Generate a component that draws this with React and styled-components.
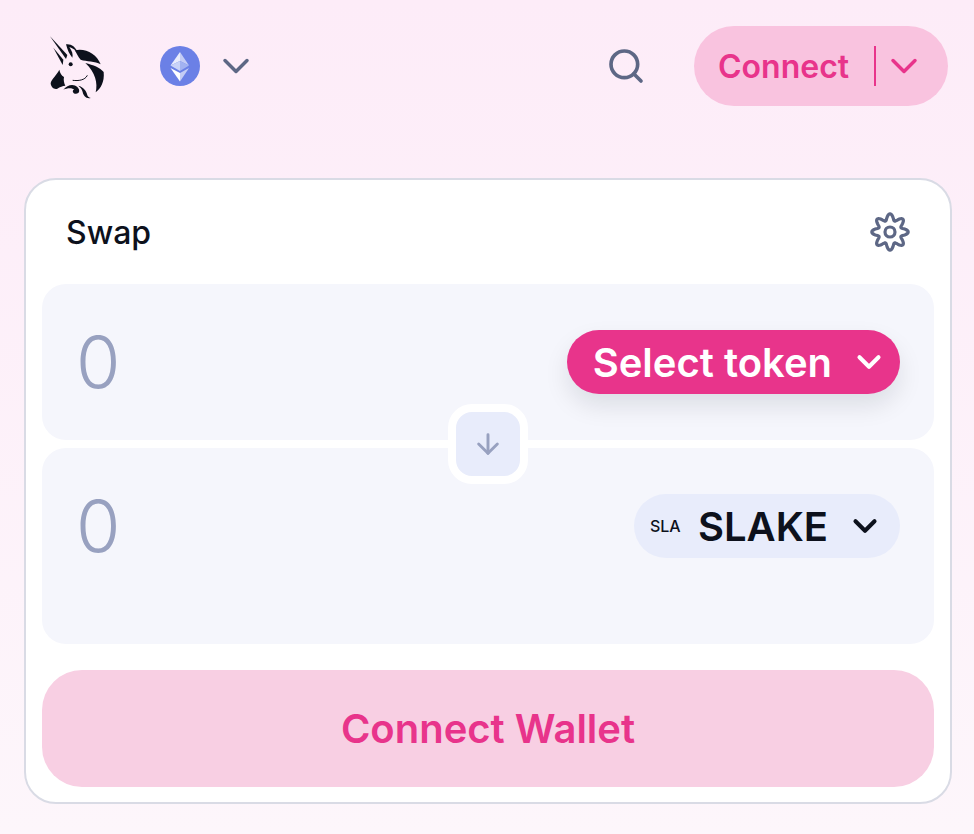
import React from "react";
import styled, { createGlobalStyle } from "styled-components";
import { ArrowDown, ChevronDown, Search } from "lucide-react";

const GlobalStyle = createGlobalStyle`
  html, body {
    margin: 0;
    padding: 0;
  }
  body {
    min-height: 834px;
    font-family: Inter, "Liberation Sans", sans-serif;
    background: linear-gradient(180deg, #fdecf8 0%, #fdf6fb 100%);
    overflow: hidden;
  }
  * {
    box-sizing: border-box;
  }
`;

const Page = styled.div`
  width: 974px;
  height: 834px;
  padding: 26px 22px 0 24px;
`;

const Header = styled.header`
  display: flex;
  align-items: center;
  height: 80px;
  padding-left: 24px;
  padding-right: 4px;
`;

const Logo = styled.svg`
  width: 58px;
  height: 64px;
  margin-top: 1px;
`;

const NetworkButton = styled.div`
  display: flex;
  align-items: center;
  gap: 14px;
  margin-left: 54px;
  color: #5d6785;
`;

const SearchButton = styled.div`
  display: flex;
  margin-left: auto;
  margin-right: 48px;
  color: #5d6785;
`;

const ConnectButton = styled.div`
  display: flex;
  align-items: center;
  width: 254px;
  height: 80px;
  padding-left: 24px;
  border-radius: 40px;
  background: #f9c3df;
  color: #e8348b;
  font-size: 32px;
  font-weight: 600;
`;

const Divider = styled.span`
  width: 2px;
  height: 40px;
  margin: 0 6px 0 25px;
  background: #e8348b;
`;

const Card = styled.main`
  position: relative;
  width: 928px;
  height: 626px;
  margin-top: 72px;
  padding: 0 16px;
  border: 2px solid #d9dbe5;
  border-radius: 32px;
  background: #fff;
`;

const CardHeader = styled.div`
  display: flex;
  align-items: center;
  justify-content: space-between;
  height: 104px;
  padding: 0 24px;
`;

const Title = styled.div`
  color: #0d111c;
  font-size: 32px;
  font-weight: 500;
`;

const Panel = styled.section`
  display: flex;
  justify-content: space-between;
  height: ${(p) => p.$height}px;
  margin-bottom: 8px;
  padding: 46px 34px 0 34px;
  border-radius: 24px;
  background: #f5f6fc;
`;

const Amount = styled.div`
  height: 64px;
  color: #98a1c0;
  font-size: 72px;
  font-weight: 350;
  line-height: 64px;
`;

const TokenButton = styled.div`
  display: flex;
  align-items: center;
  height: 64px;
  padding-left: ${(p) => (p.$selected ? 16 : 26)}px;
  padding-right: ${(p) => (p.$selected ? 16 : 12)}px;
  border-radius: 32px;
  background: ${(p) => (p.$selected ? "#e8ecfb" : "#e8348b")};
  color: ${(p) => (p.$selected ? "#0d111c" : "#fff")};
  font-size: 40px;
  font-weight: 600;
  box-shadow: ${(p) => (p.$selected ? "none" : "0 12px 24px rgba(13, 17, 28, 0.1)")};
`;

const TokenLogo = styled.span`
  width: 32px;
  margin-right: 16px;
  font-size: 16px;
  font-weight: 500;
`;

const TokenName = styled.span`
  margin-right: 18px;
`;

const FlipButton = styled.div`
  position: absolute;
  top: 224px;
  left: 422px;
  display: flex;
  align-items: center;
  justify-content: center;
  width: 80px;
  height: 80px;
  border: 8px solid #fff;
  border-radius: 24px;
  background: #e8ecfb;
  color: #98a1c0;
`;

const WalletButton = styled.div`
  display: flex;
  align-items: center;
  justify-content: center;
  height: 117px;
  margin-top: 26px;
  border-radius: 40px;
  background: #f8cfe3;
  color: #e8348b;
  font-size: 40px;
  font-weight: 600;
`;

const UnicornLogo = () => (
  <Logo viewBox="55 44 172 192" fill="#0d111c">
    <path d="M60 48 L112 104 L108 116 Z" />
    <path d="M70 82 L100 118 L98 134 Z" />
    <path d="M108 72 C124 70 136 80 142 94 C136 90 128 84 118 80 C126 92 130 102 127 112 C118 102 112 88 108 72 Z" />
    <path d="M134 90 C165 82 200 100 212 132 C195 122 170 124 152 118 C144 110 140 98 134 90 Z" />
    <path d="M166 128 C190 134 210 142 221 155 C224 185 212 205 197 216 C204 190 196 155 166 128 Z" />
    <circle cx="122" cy="132" r="6" />
    <path d="M88 148 C80 165 65 175 62 188 C62 200 72 208 82 205 C90 200 98 196 106 196 C102 190 100 178 102 170 C94 165 90 158 88 148 Z" />
    <path d="M128 180 C145 182 165 180 172 165" fill="none" stroke="#0d111c" strokeWidth="3" />
    <path d="M100 208 C112 192 132 190 142 200 C152 210 148 222 135 220 C128 218 126 210 132 208 C128 202 112 202 100 208 Z" />
    <path d="M145 196 C160 200 170 212 172 225 C175 232 182 233 182 233 C168 236 160 226 158 215 C156 206 150 200 145 196 Z" />
  </Logo>
);

const EthIcon = () => (
  <svg width="40" height="40" viewBox="0 0 40 40">
    <circle cx="20" cy="20" r="20" fill="#6b80e6" />
    <path d="M20 6 V15 L29 19.5 Z" fill="#fff" fillOpacity="0.6" />
    <path d="M20 6 L10.5 19.5 L20 15 Z" fill="#fff" fillOpacity="0.85" />
    <path d="M20 15 L10.5 19.5 L20 25 Z" fill="#c9d3f8" />
    <path d="M20 15 L29 19.5 L20 25 Z" fill="#a2b2f1" />
    <path d="M20 27 V35.5 L29 22 Z" fill="#fff" fillOpacity="0.6" />
    <path d="M20 27 L10.5 22 L20 35.5 Z" fill="#fff" />
  </svg>
);

// eight soft lobes, the reference gear is rounder than the lucide one
const gearPath = () => {
  const points = [];
  for (let i = 0; i < 160; i++) {
    const a = (i / 160) * Math.PI * 2;
    const r = 15 + 3.2 * Math.cos(8 * a);
    points.push(`${(20 + r * Math.sin(a)).toFixed(2)} ${(20 - r * Math.cos(a)).toFixed(2)}`);
  }
  return `M${points.join(" L")} Z`;
};

const GearIcon = () => (
  <svg width="40" height="40" viewBox="0 0 40 40" fill="none" stroke="#5d6785" strokeWidth="3.2">
    <path d={gearPath()} strokeLinejoin="round" />
    <circle cx="20" cy="20" r="5" />
  </svg>
);

const App = () => (
  <>
    <GlobalStyle />
    <Page>
      <Header>
        <UnicornLogo />
        <NetworkButton>
          <EthIcon />
          <ChevronDown size={44} strokeWidth={1.9} />
        </NetworkButton>
        <SearchButton>
          <Search size={40} strokeWidth={2.2} />
        </SearchButton>
        <ConnectButton>
          Connect
          <Divider />
          <ChevronDown size={44} strokeWidth={1.9} />
        </ConnectButton>
      </Header>

      <Card>
        <CardHeader>
          <Title>Swap</Title>
          <GearIcon />
        </CardHeader>
        <Panel $height={156}>
          <Amount>0</Amount>
          <TokenButton>
            <TokenName>Select token</TokenName>
            <ChevronDown size={38} strokeWidth={2.6} />
          </TokenButton>
        </Panel>
        <FlipButton>
          <ArrowDown size={32} strokeWidth={2.2} />
        </FlipButton>
        <Panel $height={196}>
          <Amount>0</Amount>
          <TokenButton $selected>
            <TokenLogo>SLA</TokenLogo>
            <TokenName>SLAKE</TokenName>
            <ChevronDown size={38} strokeWidth={2.6} />
          </TokenButton>
        </Panel>
        <WalletButton>Connect Wallet</WalletButton>
      </Card>
    </Page>
  </>
);

export default App;
